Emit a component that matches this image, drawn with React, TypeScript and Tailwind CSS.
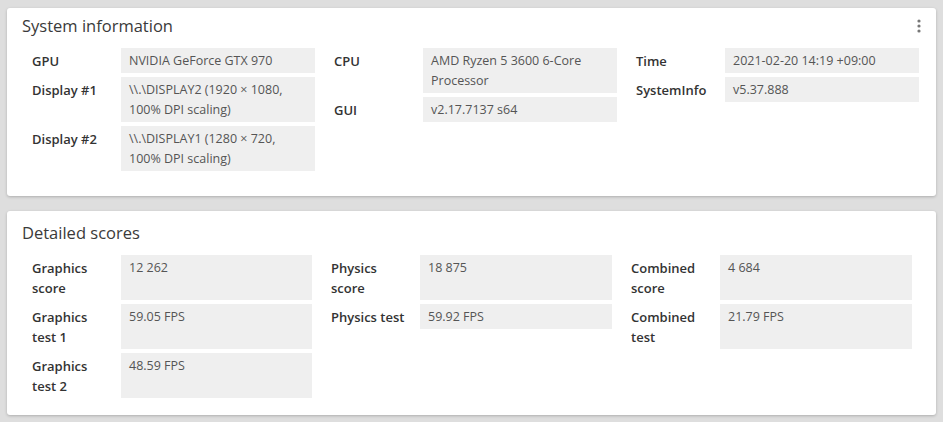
import React from "react";

type Row = { label: React.ReactNode; value: React.ReactNode };

const font = { fontFamily: '"Open Sans", "Noto Sans", sans-serif' };

function Column({ rows, width }: { rows: Row[]; width: string }) {
  return (
    <div className={`flex flex-col gap-[4px] ${width}`}>
      {rows.map((r, i) => (
        <div key={i} className="flex">
          <div className="w-[99px] shrink-0 pl-[10px] pr-[4px] pt-[3px] text-[13px] font-semibold leading-[20px] text-[#333]">
            {r.label}
          </div>
          <div className="flex-1 bg-[#efefef] pl-[8px] pr-[6px] pt-[3px] pb-[2px] text-[12.5px] leading-[20px] text-[#555]">
            {r.value}
          </div>
        </div>
      ))}
    </div>
  );
}

export default function App() {
  return (
    <div
      className="flex min-h-[422px] w-[943px] flex-col gap-[15px] bg-[#dedede] px-[7px] pt-[8px]"
      style={font}
    >
      <div className="relative h-[188px] rounded-[3px] bg-white pl-[15px] pt-[6px] shadow-[0_1px_3px_rgba(0,0,0,0.22)]">
        <svg
          className="absolute right-[15px] top-[11px]"
          width="4"
          height="14"
          viewBox="0 0 4 14"
        >
          <circle cx="2" cy="2" r="1.6" fill="#777" />
          <circle cx="2" cy="7" r="1.6" fill="#777" />
          <circle cx="2" cy="12" r="1.6" fill="#777" />
        </svg>
        <h2 className="text-[16.5px] leading-[24px] text-[#3a3a3a]">System information</h2>
        <div className="mt-[10px] flex gap-[9px]">
          <Column
            width="w-[293px]"
            rows={[
              { label: "GPU", value: "NVIDIA GeForce GTX 970" },
              {
                label: "Display #1",
                value: (
                  <>
                    \\.\DISPLAY2 (1920 × 1080,
                    <br />
                    100% DPI scaling)
                  </>
                ),
              },
              {
                label: "Display #2",
                value: (
                  <>
                    \\.\DISPLAY1 (1280 × 720,
                    <br />
                    100% DPI scaling)
                  </>
                ),
              },
            ]}
          />
          <Column
            width="w-[293px]"
            rows={[
              {
                label: "CPU",
                value: (
                  <>
                    AMD Ryzen 5 3600 6-Core
                    <br />
                    Processor
                  </>
                ),
              },
              { label: "GUI", value: "v2.17.7137 s64" },
            ]}
          />
          <Column
            width="w-[293px]"
            rows={[
              { label: "Time", value: "2021-02-20 14:19 +09:00" },
              { label: "SystemInfo", value: "v5.37.888" },
            ]}
          />
        </div>
      </div>

      <div className="h-[204px] rounded-[3px] bg-white pl-[15px] pt-[10px] shadow-[0_1px_3px_rgba(0,0,0,0.22)]">
        <h2 className="text-[16.5px] leading-[24px] text-[#3a3a3a]">Detailed scores</h2>
        <div className="mt-[10px] flex gap-[9px]">
          <Column
            width="w-[290px]"
            rows={[
              { label: (<>Graphics<br />score</>), value: (<>12 262<br />&nbsp;</>) },
              { label: (<>Graphics<br />test 1</>), value: (<>59.05 FPS<br />&nbsp;</>) },
              { label: (<>Graphics<br />test 2</>), value: (<>48.59 FPS<br />&nbsp;</>) },
            ]}
          />
          <Column
            width="w-[291px]"
            rows={[
              { label: (<>Physics<br />score</>), value: (<>18 875<br />&nbsp;</>) },
              { label: "Physics test", value: "59.92 FPS" },
            ]}
          />
          <Column
            width="w-[291px]"
            rows={[
              { label: (<>Combined<br />score</>), value: (<>4 684<br />&nbsp;</>) },
              { label: (<>Combined<br />test</>), value: (<>21.79 FPS<br />&nbsp;</>) },
            ]}
          />
        </div>
      </div>
    </div>
  );
}
